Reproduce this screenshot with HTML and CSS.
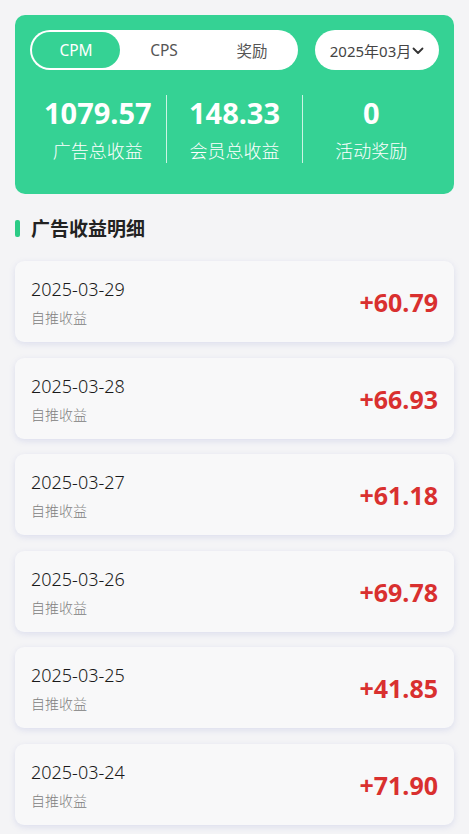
FILE: index.html
```html
<!DOCTYPE html>
<html lang="zh">
<head>
<meta charset="utf-8">
<link rel="stylesheet" href="styles.css">
</head>
<body>
<div class="hero">
  <div class="top-row">
    <div class="tabs">
      <div class="tab active">CPM</div>
      <div class="tab">CPS</div>
      <div class="tab">奖励</div>
    </div>
    <div class="date-pick">
      <span>2025年03月</span>
      <svg class="chev" width="12" height="8" viewBox="0 0 12 8"><path d="M1.5 1.5 L6 6 L10.5 1.5" fill="none" stroke="#333" stroke-width="1.8" stroke-linecap="round" stroke-linejoin="round"/></svg>
    </div>
  </div>
  <div class="stats">
    <div class="stat">
      <div class="num">1079.57</div>
      <div class="lbl">广告总收益</div>
    </div>
    <div class="stat">
      <div class="num">148.33</div>
      <div class="lbl">会员总收益</div>
    </div>
    <div class="stat">
      <div class="num">0</div>
      <div class="lbl">活动奖励</div>
    </div>
  </div>
</div>

<div class="section-title"><span class="bar"></span><span>广告收益明细</span></div>

<div class="list">
  <div class="item"><div class="info"><div class="date">2025-03-29</div><div class="sub">自推收益</div></div><div class="amt">+60.79</div></div>
  <div class="item"><div class="info"><div class="date">2025-03-28</div><div class="sub">自推收益</div></div><div class="amt">+66.93</div></div>
  <div class="item"><div class="info"><div class="date">2025-03-27</div><div class="sub">自推收益</div></div><div class="amt">+61.18</div></div>
  <div class="item"><div class="info"><div class="date">2025-03-26</div><div class="sub">自推收益</div></div><div class="amt">+69.78</div></div>
  <div class="item"><div class="info"><div class="date">2025-03-25</div><div class="sub">自推收益</div></div><div class="amt">+41.85</div></div>
  <div class="item"><div class="info"><div class="date">2025-03-24</div><div class="sub">自推收益</div></div><div class="amt">+71.90</div></div>
</div>
</body>
</html>
```

FILE: styles.css
```css
* { box-sizing: border-box; }
html, body { margin: 0; padding: 0; }
body {
  background: #f4f4f6;
  font-family: "Noto Sans", "Noto Sans CJK SC", sans-serif;
  padding: 15px;
  color: #333;
  overflow: hidden;
  height: 834px;
}
.hero {
  background: #35d294;
  border-radius: 10px;
  padding: 15px 15px 31px;
}
.top-row {
  display: flex;
  justify-content: space-between;
  align-items: center;
}
.tabs {
  width: 268px;
  height: 40px;
  background: #fff;
  border-radius: 20px;
  padding: 2px;
  display: flex;
}
.tab {
  flex: 1;
  height: 36px;
  border-radius: 18px;
  display: flex;
  align-items: center;
  justify-content: center;
  font-size: 15.5px;
  color: #555;
}
.tab.active {
  background: #35d294;
  color: #fff;
}
.date-pick {
  width: 124px;
  height: 40px;
  background: #fff;
  border-radius: 20px;
  display: flex;
  align-items: center;
  justify-content: center;
  gap: 1px;
  font-size: 15px;
  color: #444;
}
.chev { margin-top: 1px; }
.stats {
  display: flex;
  margin-top: 25px;
}
.stat {
  flex: 1;
  text-align: center;
  color: #fff;
}
.stat + .stat { border-left: 1px solid rgba(255,255,255,0.75); }
.num {
  font-size: 29px;
  font-weight: 700;
  line-height: 36px;
}
.lbl {
  font-size: 18px;
  line-height: 24px;
  margin-top: 8px;
  font-weight: 300;
}
.section-title {
  display: flex;
  align-items: center;
  gap: 11px;
  margin-top: 22px;
  height: 24px;
  font-size: 19px;
  font-weight: 700;
  color: #222;
}
.bar {
  width: 5px;
  height: 17px;
  border-radius: 2px;
  background: #2ccb86;
}
.list {
  margin-top: 21px;
  display: flex;
  flex-direction: column;
  gap: 15.6px;
}
.item {
  height: 81px;
  background: #f8f8f9;
  border-radius: 9px;
  box-shadow: 0 2px 6px rgba(110, 120, 200, 0.18);
  display: flex;
  align-items: center;
  justify-content: space-between;
  padding: 0 16px;
}
.info { display: flex; flex-direction: column; }
.date {
  font-size: 18px;
  line-height: 24px;
  color: #1a1a1a;
  margin-top: 2px;
  font-weight: 300;
}
.sub {
  font-size: 14px;
  line-height: 20px;
  color: #808080;
  margin-top: 7px;
  font-weight: 300;
}
.amt {
  font-size: 25px;
  font-weight: 700;
  color: #d9302f;
  margin-top: 1px;
}
```
